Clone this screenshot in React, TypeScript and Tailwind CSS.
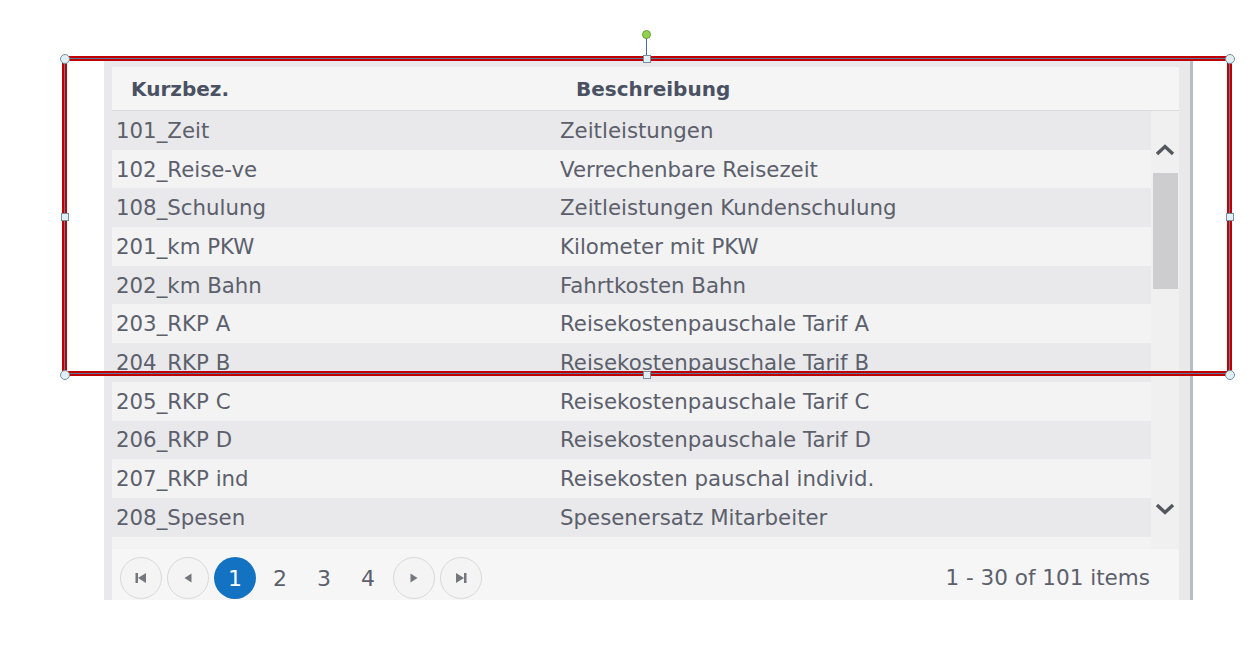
import React from "react";

const rows: [string, string][] = [
  ["101_Zeit", "Zeitleistungen"],
  ["102_Reise-ve", "Verrechenbare Reisezeit"],
  ["108_Schulung", "Zeitleistungen Kundenschulung"],
  ["201_km PKW", "Kilometer mit PKW"],
  ["202_km Bahn", "Fahrtkosten Bahn"],
  ["203_RKP A", "Reisekostenpauschale Tarif A"],
  ["204_RKP B", "Reisekostenpauschale Tarif B"],
  ["205_RKP C", "Reisekostenpauschale Tarif C"],
  ["206_RKP D", "Reisekostenpauschale Tarif D"],
  ["207_RKP ind", "Reisekosten pauschal individ."],
  ["208_Spesen", "Spesenersatz Mitarbeiter"],
  ["209_Zuschl", "Zusätzliche Auslagen individuell"],
];

function NavBtn({ children, className = "" }: { children: React.ReactNode; className?: string }) {
  return (
    <div
      className={
        "w-[42px] h-[42px] rounded-full border border-[#d9d9db] bg-[#f4f4f5] flex items-center justify-center shrink-0 " +
        className
      }
    >
      {children}
    </div>
  );
}

function Circle({ x, y }: { x: number; y: number }) {
  return (
    <div
      className="absolute w-[10px] h-[10px] rounded-full border border-[#7d8c9b] bg-[#dff1f6]"
      style={{ left: x - 5, top: y - 5 }}
    />
  );
}

function Square({ x, y }: { x: number; y: number }) {
  return (
    <div
      className="absolute w-[8px] h-[8px] border border-[#7d8c9b] bg-[#dff1f6]"
      style={{ left: x - 4, top: y - 4 }}
    />
  );
}

export default function App() {
  return (
    <div
      className="relative w-[1260px] h-[647px] bg-white overflow-hidden"
      style={{ fontFamily: '"DejaVu Sans", "Open Sans", sans-serif' }}
    >
      <div className="ml-[104px] mt-[60px] w-[1089px] h-[540px] bg-[#e9e9eb] border-r-[3px] border-[#b9bdc6] pl-[8px] pt-[7px] pr-[11px] flex flex-col">
        {/* header */}
        <div className="h-[44px] shrink-0 bg-[#f5f5f5] border-b border-[#dcdcde] flex items-center text-[20px] font-bold text-[#4a5163] pt-[1px]">
          <div className="w-[445px] pl-[19px]">Kurzbez.</div>
          <div className="pl-[19px]">Beschreibung</div>
        </div>
        {/* body */}
        <div className="h-[438px] shrink-0 flex overflow-hidden">
          <div className="w-[1039px] shrink-0 flex flex-col">
            {rows.map((r, i) => (
              <div
                key={r[0]}
                className={
                  "h-[38.7px] shrink-0 flex items-center text-[21.3px] text-[#5b606c] " +
                  (i === rows.length - 1 ? "pt-[4px] " : "pt-[1px] ") +
                  (i % 2 === 0 ? "bg-[#e9e9eb]" : "bg-[#f3f3f4]")
                }
              >
                <div className="w-[444px] pl-[4px] whitespace-nowrap">{r[0]}</div>
                <div className="pl-[4px] whitespace-nowrap">{r[1]}</div>
              </div>
            ))}
          </div>
          <div className="w-[28px] shrink-0 bg-[#f0f0f1] flex flex-col">
            <svg width="20" height="12" viewBox="0 0 20 12" className="mt-[33px] ml-[4px]">
              <path d="M2 10 L10 2.5 L18 10" fill="none" stroke="#53575e" strokeWidth="3.4" />
            </svg>
            <div className="mt-[17px] ml-[2px] w-[25px] h-[116px] bg-[#cdcdcf]" />
            <svg width="20" height="12" viewBox="0 0 20 12" className="mt-[214px] ml-[4px]">
              <path d="M2 2 L10 9.5 L18 2" fill="none" stroke="#53575e" strokeWidth="3.4" />
            </svg>
          </div>
        </div>
        {/* pager */}
        <div className="flex-1 bg-[#f6f6f6] flex items-start pt-[8px] pl-[8px] pr-[29px]">
          <div className="flex items-center">
            <NavBtn>
              <svg width="14" height="12" viewBox="0 0 14 12">
                <rect x="1.5" y="1" width="2.5" height="10" fill="#74777d" />
                <path d="M12 1 L4 6 L12 11 Z" fill="#74777d" />
              </svg>
            </NavBtn>
            <NavBtn className="ml-[5px]">
              <svg width="14" height="12" viewBox="0 0 14 12">
                <path d="M10.5 1.5 L3.5 6 L10.5 10.5 Z" fill="#74777d" />
              </svg>
            </NavBtn>
            <div className="ml-[5px] w-[42px] h-[42px] rounded-full bg-[#1372c1] text-white text-[22px] flex items-center justify-center">
              1
            </div>
            <div className="ml-[2px] w-[44px] h-[42px] text-[22px] text-[#5b606c] flex items-center justify-center">2</div>
            <div className="w-[44px] h-[42px] text-[22px] text-[#5b606c] flex items-center justify-center">3</div>
            <div className="w-[44px] h-[42px] text-[22px] text-[#5b606c] flex items-center justify-center">4</div>
            <NavBtn className="ml-[3px]">
              <svg width="14" height="12" viewBox="0 0 14 12">
                <path d="M3.5 1.5 L10.5 6 L3.5 10.5 Z" fill="#74777d" />
              </svg>
            </NavBtn>
            <NavBtn className="ml-[5px]">
              <svg width="14" height="12" viewBox="0 0 14 12">
                <path d="M2 1 L10 6 L2 11 Z" fill="#74777d" />
                <rect x="10" y="1" width="2.5" height="10" fill="#74777d" />
              </svg>
            </NavBtn>
          </div>
          <div className="ml-auto h-[42px] flex items-center text-[21.5px] text-[#5b606c]">
            1 - 30 of 101 items
          </div>
        </div>
      </div>

      {/* selection overlay */}
      <div className="absolute left-[62px] top-[56px] w-[1170px] h-[320px] border-[5px] border-[#c00000]" />
      <div className="absolute left-[64px] top-[58px] w-[1166px] h-[316px] border border-[#5d7c9c]" />
      <div className="absolute left-[646px] top-[38px] w-[1px] h-[18px] bg-[#4a6f9a]" />
      <div className="absolute left-[642px] top-[30px] w-[9px] h-[9px] rounded-full bg-[#92d050] border border-[#6a9f3a]" />
      <Circle x={64.5} y={58.5} />
      <Circle x={1229.5} y={58.5} />
      <Circle x={64.5} y={374.5} />
      <Circle x={1229.5} y={374.5} />
      <Square x={646.5} y={58.5} />
      <Square x={64.5} y={216.5} />
      <Square x={1229.5} y={216.5} />
      <Square x={646.5} y={374.5} />
    </div>
  );
}
